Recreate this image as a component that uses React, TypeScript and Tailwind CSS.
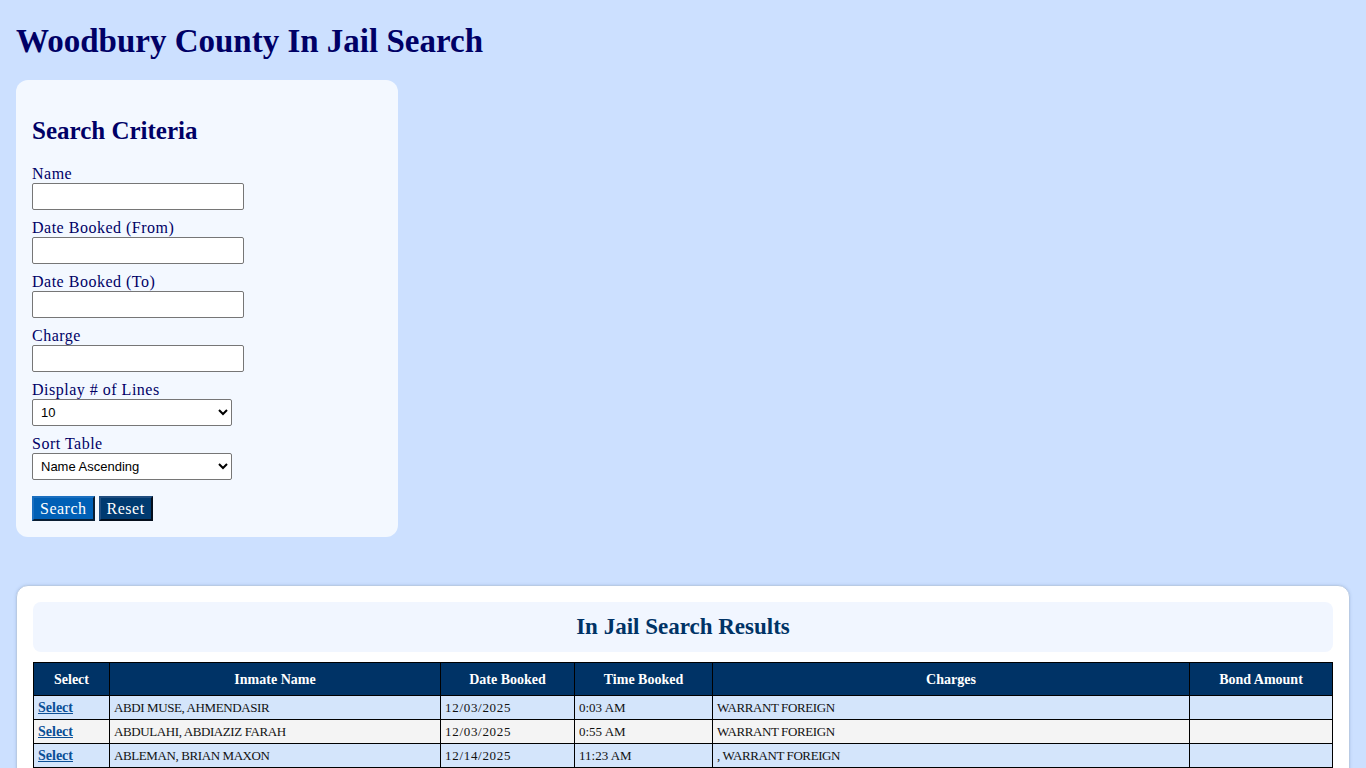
const rows = [
  { name: "ABDI MUSE, AHMENDASIR", date: "12/03/2025", time: "0:03 AM", charges: "WARRANT FOREIGN", bond: "" },
  { name: "ABDULAHI, ABDIAZIZ FARAH", date: "12/03/2025", time: "0:55 AM", charges: "WARRANT FOREIGN", bond: "" },
  { name: "ABLEMAN, BRIAN MAXON", date: "12/14/2025", time: "11:23 AM", charges: ", WARRANT FOREIGN", bond: "" },
];

const fields = ["Name", "Date Booked (From)", "Date Booked (To)", "Charge"];

export default function App() {
  return (
    <div className="min-h-screen bg-[#cce0ff] px-4 pt-[22px] pb-4 font-['Liberation_Serif',serif] text-[#000066]">
      <h1 className="text-[33px] font-bold leading-[38px]">Woodbury County In Jail Search</h1>

      <div className="mt-[20px] w-[382px] rounded-xl bg-[#f3f8ff] px-4 pt-[36px] pb-4">
        <h2 className="text-[25px] font-bold leading-[30px]">Search Criteria</h2>
        <form className="mt-[19px]" onSubmit={(e) => e.preventDefault()}>
          {fields.map((f) => (
            <div key={f} className="mb-[9px]">
              <label className="block text-[16px] leading-[18px] tracking-[0.5px]">{f}</label>
              <input
                type="text"
                className="h-[27px] w-[212px] rounded-[2px] border border-[#767676] bg-white px-1 text-[13px]"
              />
            </div>
          ))}
          <div className="mb-[9px]">
            <label className="block text-[16px] leading-[18px] tracking-[0.5px]">Display # of Lines</label>
            <select className="h-[27px] w-[200px] rounded-[2px] border border-[#767676] bg-white px-1 font-['Liberation_Sans',sans-serif] text-[13px] text-black">
              <option>10</option>
              <option>25</option>
              <option>50</option>
            </select>
          </div>
          <div>
            <label className="block text-[16px] leading-[18px] tracking-[0.5px]">Sort Table</label>
            <select className="h-[27px] w-[200px] rounded-[2px] border border-[#767676] bg-white px-1 font-['Liberation_Sans',sans-serif] text-[13px] text-black">
              <option>Name Ascending</option>
              <option>Name Descending</option>
            </select>
          </div>
          <div className="mt-[16px] flex gap-[4px]">
            <button className="h-[25px] border-2 border-t-[#1a6fc0] border-l-[#1a6fc0] border-r-[#0a1e33] border-b-[#0a1e33] bg-[#0060b6] px-[6px] text-[16px] leading-none tracking-[0.5px] text-white">
              Search
            </button>
            <button className="h-[25px] border-2 border-t-[#204e80] border-l-[#204e80] border-r-[#050f1c] border-b-[#050f1c] bg-[#003a70] px-[6px] text-[16px] leading-none tracking-[0.5px] text-white">
              Reset
            </button>
          </div>
        </form>
      </div>

      <div className="mt-[48px] rounded-xl border border-[#b9cbe4] bg-white px-4 pt-4 pb-4 shadow-[0_0_3px_rgba(100,130,180,0.3)]">
        <div className="flex h-[50px] items-center justify-center rounded-lg bg-[#f1f6ff]">
          <h2 className="text-[23px] font-bold text-[#003366]">In Jail Search Results</h2>
        </div>
        <table className="mt-[10px] w-full border-collapse text-[13px] text-[#111]">
          <thead>
            <tr className="h-[33px] bg-[#003366] text-[14px] text-white">
              <th className="w-[76px] border border-black font-bold">Select</th>
              <th className="w-[331px] border border-black font-bold">Inmate Name</th>
              <th className="w-[134px] border border-black font-bold">Date Booked</th>
              <th className="w-[138px] border border-black font-bold">Time Booked</th>
              <th className="w-[477px] border border-black font-bold">Charges</th>
              <th className="border border-black font-bold">Bond Amount</th>
            </tr>
          </thead>
          <tbody>
            {rows.map((r, i) => (
              <tr key={r.name} className={`h-[24px] ${i % 2 === 0 ? "bg-[#d4e5fb]" : "bg-[#f4f4f4]"}`}>
                <td className="border border-black px-1">
                  <a href="#" className="text-[14px] font-bold text-[#0b4f96] underline">
                    Select
                  </a>
                </td>
                <td className="border border-black px-1 tracking-[-0.4px]">{r.name}</td>
                <td className="border border-black px-1 tracking-[0.7px]">{r.date}</td>
                <td className="border border-black px-1">{r.time}</td>
                <td className="border border-black px-1 tracking-[-0.4px]">{r.charges}</td>
                <td className="border border-black px-1">{r.bond}</td>
              </tr>
            ))}
          </tbody>
        </table>
      </div>
    </div>
  );
}
